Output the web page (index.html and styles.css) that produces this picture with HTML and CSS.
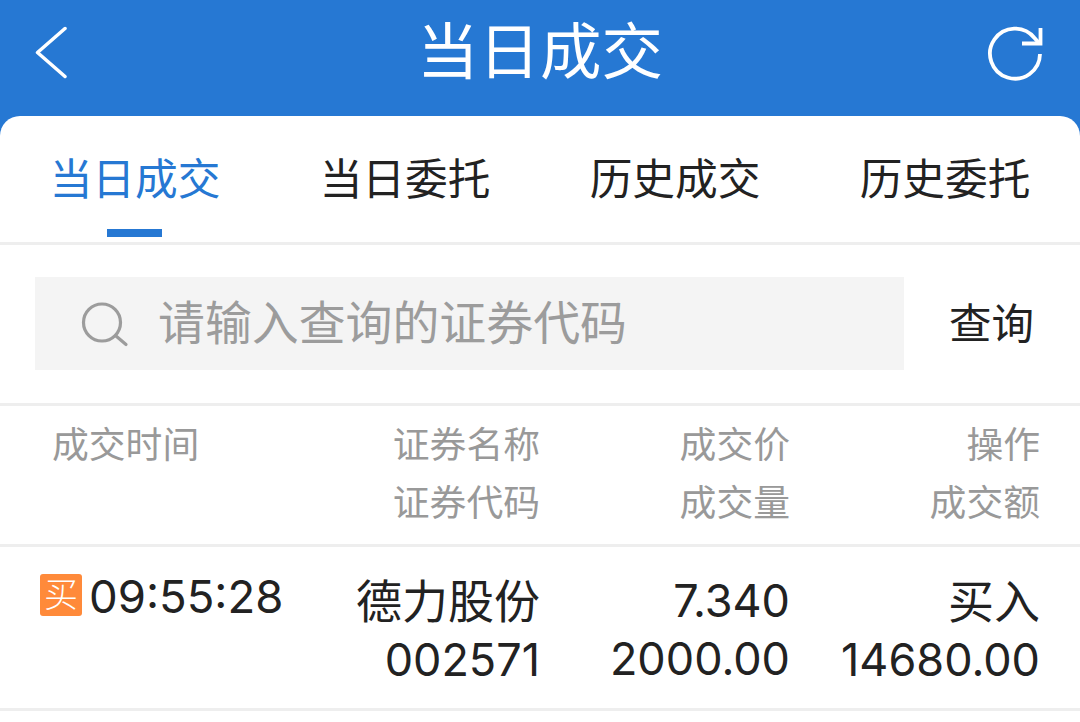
FILE: index.html
```html
<!DOCTYPE html>
<html lang="zh-CN">
<head>
    <meta charset="UTF-8">
    <meta name="viewport" content="width=device-width, initial-scale=1.0">
    <title>当日成交</title>
    <link rel="stylesheet" href="styles.css">
</head>
<body>
    <header class="topbar">
        <svg class="back-icon" width="34" height="54" viewBox="0 0 34 54">
            <path d="M32 3.500 L4.500 27.500 L32 51.500" fill="none" stroke="#fff" stroke-width="3.500" stroke-linecap="round" stroke-linejoin="round"/>
        </svg>
        <h1>当日成交</h1>
        <svg class="refresh-icon" width="56" height="56" viewBox="0 0 56 56">
            <path d="M53 29 A25 25 0 1 1 47.500 13 L52 18" fill="none" stroke="#fff" stroke-width="3.800"/>
            <path d="M53.500 3 V18.500 H35" fill="none" stroke="#fff" stroke-width="3.800"/>
        </svg>
    </header>
    <main class="panel">
        <nav class="tabs">
            <div class="tab active">当日成交</div>
            <div class="tab">当日委托</div>
            <div class="tab">历史成交</div>
            <div class="tab">历史委托</div>
        </nav>
        <div class="search-row">
            <div class="search-box">
                <svg width="48" height="48" viewBox="0 0 48 48">
                    <circle cx="21" cy="22.500" r="18.500" fill="none" stroke="#9c9c9c" stroke-width="3.200"/>
                    <path d="M35 36 L45 44.500" fill="none" stroke="#9c9c9c" stroke-width="3.200" stroke-linecap="round"/>
                </svg>
                <span>请输入查询的证券代码</span>
            </div>
            <div class="search-btn">查询</div>
        </div>
        <div class="table-head">
            <div class="col-time">成交时间</div>
            <div class="col"><div>证券名称</div><div>证券代码</div></div>
            <div class="col"><div>成交价</div><div>成交量</div></div>
            <div class="col"><div>操作</div><div>成交额</div></div>
        </div>
        <div class="table-row">
            <div class="col-time time-cell"><span class="badge">买</span><span class="time">09:55:28</span></div>
            <div class="col"><div>德力股份</div><div class="num">002571</div></div>
            <div class="col"><div class="num">7.340</div><div class="num">2000.00</div></div>
            <div class="col"><div>买入</div><div class="num">14680.00</div></div>
        </div>
    </main>
</body>
</html>
```

FILE: styles.css
```css
* {
    box-sizing: border-box;
}
html, body {
    height: 100%;
}
body {
    margin: 0;
    background-color: #2678d3;
    font-family: Inter, "Noto Sans CJK SC", sans-serif;
    color: #222;
    overflow: hidden;
}
.topbar {
    height: 116px;
    padding: 0 37px 0 33px;
    display: flex;
    align-items: flex-start;
    justify-content: space-between;
    position: relative;
}
.topbar h1 {
    margin: 0;
    position: absolute;
    left: 0;
    right: 0;
    top: 16px;
    text-align: center;
    font-size: 61.500px;
    line-height: 72px;
    font-weight: 400;
    color: #fff;
}
.back-icon {
    margin-top: 25px;
}
.refresh-icon {
    margin-top: 25px;
}
.panel {
    background-color: #fff;
    border-radius: 20px 20px 0 0;
    height: 606px;
}
.tabs {
    display: flex;
    height: 129px;
    border-bottom: 3px solid #eee;
}
.tab {
    flex: 1;
    text-align: center;
    font-size: 42.700px;
    line-height: 50px;
    padding-top: 39px;
    position: relative;
}
.tab.active {
    color: #2678d3;
}
.tab.active::after {
    content: "";
    position: absolute;
    left: 107px;
    bottom: 5px;
    width: 55px;
    height: 8px;
    background-color: #2678d3;
}
.search-row {
    display: flex;
    align-items: flex-start;
    height: 161px;
    padding: 32px 46px 0 35px;
    border-bottom: 3px solid #eee;
}
.search-box {
    width: 869px;
    height: 93px;
    background-color: #f4f4f4;
    display: flex;
    align-items: center;
    padding-left: 46px;
    color: #9c9c9c;
    gap: 29px;
}
.search-box span {
    font-size: 46.900px;
    line-height: 93px;
}
.search-btn {
    margin-left: auto;
    font-size: 42.500px;
    line-height: 93px;
}
.table-head, .table-row {
    display: grid;
    grid-template-columns: 250px 250px 250px 250px;
    padding-left: 40px;
    border-bottom: 3px solid #eee;
}
.table-head {
    height: 141px;
    color: #999;
    font-size: 36.800px;
    line-height: 58px;
    padding-top: 10px;
}
.table-head .col-time {
    padding-left: 12px;
}
.table-row {
    height: 164px;
    font-size: 46px;
    line-height: 59px;
    padding-top: 25px;
}
.col {
    text-align: right;
}
.num {
    font-size: 45px;
    margin-top: -1px;
}
.time-cell {
    display: flex;
    align-items: flex-start;
    gap: 7px;
    white-space: nowrap;
}
.time {
    font-size: 45.500px;
    line-height: 50px;
}
.badge {
    flex-shrink: 0;
    width: 42px;
    height: 42px;
    margin-top: 2px;
    background-color: #ff8a3a;
    border-radius: 3px;
    color: #fff;
    font-size: 34px;
    font-weight: 300;
    line-height: 42px;
    text-align: center;
}
```
